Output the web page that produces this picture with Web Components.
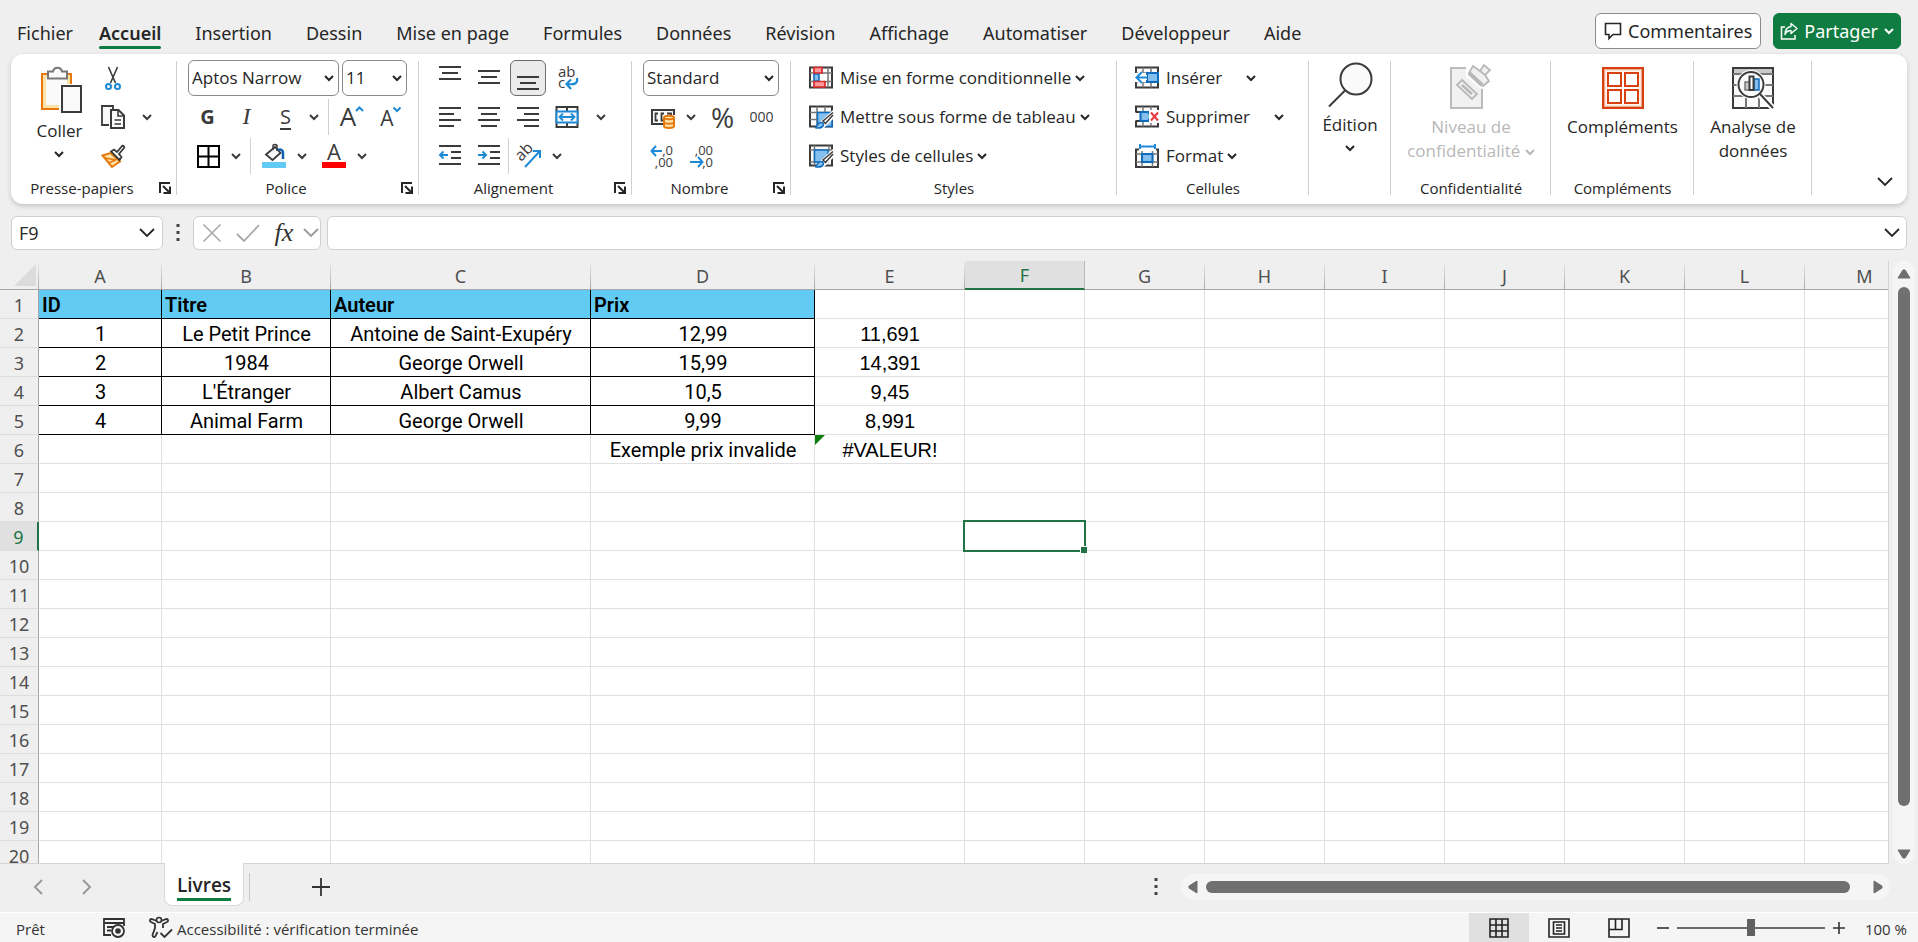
<!DOCTYPE html>
<html lang="fr">
<head>
<meta charset="utf-8">
<title>Livres – Classeur</title>
<style>
html,body{margin:0;height:100%}
body{font-family:"Open Sans","Noto Sans",sans-serif;font-size:17px;color:#262626;background:#efefef;overflow:hidden}
</style>
</head>
<body>
<workbook-app></workbook-app>
<script>
const RESET = `*{box-sizing:border-box}
button,select,input{font:inherit;color:inherit;background:none;border:0;margin:0;padding:0;outline:0}
button{display:flex;align-items:center;justify-content:center}`;

class Base extends HTMLElement {
  connectedCallback() {
    if (this.shadowRoot) return;
    const root = this.attachShadow({ mode: 'open' });
    root.innerHTML = `<style>${RESET}${this.css()}</style>${this.html()}`;
  }
  css() { return ''; }
  html() { return '<slot></slot>'; }
  attr(name, fallback = '') { return this.getAttribute(name) || fallback; }
}

const D = '#3b3b3b', B = '#1e8ad6', BF = '#83beec', BS = '#0f6cbd';
const lines = (list) => `<path d="${list.map(([x, y, w]) => `M${x} ${y}h${w}`).join('')}" stroke="${D}" stroke-width="2" fill="none"/>`;
const gridBox = `<path d="M1 1.5h22v20H1z" fill="#fafafa" stroke="${D}" stroke-width="2"/>`;
const paintBrush = `<path d="M24 5L10 18l-4 6h8l10-10z" fill="#fff"/><path d="M24 7.500l-10 8.500 2.500 2.500L24 10" fill="#fff" stroke="${D}" stroke-width="1.500"/><path d="M6 22.500c3-.5 2-5 5.500-5s4 3 1.500 4.500-5 1.200-7 .5z" fill="${BF}" stroke="${BS}" stroke-width="1.500"/>`;
const arrowHead = (d) => `<path d="${d}" fill="none" stroke="${B}" stroke-width="2"/>`;

const ICONS = {
  chev: [10, 6, `<path d="M1 1l4 4 4-4" fill="none" stroke="currentColor" stroke-width="2"/>`],
  chevBig: [16, 10, `<path d="M1 1l7 7 7-7" fill="none" stroke="currentColor" stroke-width="1.800"/>`],
  paste: [46, 46, `<path d="M8 7h29v35H8z" transform="translate(-3)" fill="#fbe2a8" stroke="#e8780a" stroke-width="2"/><path d="M9 11h21v27H9z" fill="#fafafa"/><path d="M11 4.500h5c1-5 8-5 9 0h5v7H11z" fill="#fafafa" stroke="#777" stroke-width="2"/><path d="M22 17h24v29H22z" fill="#fff"/><path d="M25 19h19v26H25z" fill="#fafafa" stroke="${D}" stroke-width="2"/>`],
  cut: [24, 24, `<path d="M7.500 1l7 16M16.500 1l-7 16" stroke="${D}" stroke-width="1.600"/><circle cx="7.500" cy="20.500" r="2.500" fill="none" stroke="${B}" stroke-width="2"/><circle cx="16.500" cy="20.500" r="2.500" fill="none" stroke="${B}" stroke-width="2"/>`],
  copy: [24, 24, `<path d="M8 20H1V1h11v3" fill="#fafafa" stroke="${D}" stroke-width="1.800"/><path d="M10 5h7.500l5.500 5.500V23H10z" fill="#fafafa" stroke="${D}" stroke-width="2"/><path d="M17 5v6h6M13.500 15h6.500M13.500 19h6.500" fill="none" stroke="${D}" stroke-width="1.600"/>`],
  brush: [24, 24, `<path d="M1.500 11.500l8-2.500 9.500 8.500-8 5.500z" fill="#fbe2a8" stroke="#e8780a" stroke-width="2"/><path d="M4 14l11 2M7 19l8-3" stroke="#e8780a" stroke-width="1.500"/><path d="M10 7.500l3-2 3 2.500 5-6c1-1 3 1 2 2l-5 6 2.500 3-2 3z" fill="#fafafa" stroke="${D}" stroke-width="1.800"/>`],
  borders: [24, 24, `<path d="M2 2h21v21H2zM12.500 2v21M2 12.500h21" fill="none" stroke="#000" stroke-width="2"/>`],
  fill: [24, 24, `<path d="M0 18h24v6H0z" fill="#61cbf3"/><path d="M4 10.500L13 3l5.500 6-8 7z" fill="#fafafa" stroke="${D}" stroke-width="1.800"/><path d="M11 6V2c0-2 4-2 4 0v5" fill="none" stroke="${D}" stroke-width="1.500"/><path d="M16 6c3-1 5 0 5 3v6" fill="none" stroke="#0f5fb0" stroke-width="2.500"/>`],
  fontColor: [24, 24, `<path d="M0 18h24v6H0z" fill="#f00"/><text x="12" y="16" text-anchor="middle" font-size="22" fill="${D}">A</text>`],
  grow: [26, 26, `<text x="9" y="22" text-anchor="middle" font-size="26" fill="${D}">A</text><path d="M17 7l3.500-3.500L24 7" fill="none" stroke="${B}" stroke-width="2"/>`],
  shrink: [26, 26, `<text x="9" y="22" text-anchor="middle" font-size="21" fill="${D}">A</text><path d="M15.500 3.500L19 7l3.500-3.500" fill="none" stroke="${B}" stroke-width="2"/>`],
  alTop: [24, 24, lines([[1, 1, 22], [4, 7, 16], [1, 13, 22]])],
  alMid: [24, 24, lines([[1, 5, 22], [4, 11, 16], [1, 17, 22]])],
  alBot: [24, 24, lines([[1, 11, 22], [4, 17, 16], [1, 23, 22]])],
  wrap: [24, 24, `<text x="3" y="11" font-size="15" fill="${D}">ab</text><text x="3" y="22" font-size="15" fill="${D}">c</text><path d="M22 12c1 5-2 7-9 6M16 13.500L11.500 18l4.500 5" fill="none" stroke="${B}" stroke-width="2.200"/>`],
  left: [24, 24, lines([[1, 3, 22], [1, 9, 15], [1, 15, 22], [1, 21, 15]])],
  center: [24, 24, lines([[1, 3, 22], [4, 9, 16], [1, 15, 22], [4, 21, 16]])],
  right: [24, 24, lines([[1, 3, 22], [8, 9, 15], [1, 15, 22], [8, 21, 15]])],
  merge: [24, 24, `<path d="M1.500 2h21v20h-21zM12 2v4M12 18v4" fill="none" stroke="${D}" stroke-width="2"/><path d="M1.500 6.500h21v11h-21z" fill="#fafafa" stroke="${B}" stroke-width="2"/><path d="M4.500 12h15M8 8.500L4.500 12 8 15.500M16 8.500l3.500 3.500-3.500 3.500" fill="none" stroke="${B}" stroke-width="1.800"/>`],
  outdent: [24, 24, lines([[1, 2, 22], [13, 8, 10], [13, 14, 10], [1, 20, 22]]) + arrowHead('M10 11H2M5.500 7.500L2 11l3.500 3.500')],
  indent: [24, 24, lines([[1, 2, 22], [13, 8, 10], [13, 14, 10], [1, 20, 22]]) + arrowHead('M1 11h8M5.500 7.500L9 11l-3.500 3.500')],
  angle: [26, 26, `<text x="4" y="17" font-size="16" fill="${D}" transform="rotate(-45 7 17)">ab</text><path d="M9 24L24 8M17 8h7v7" fill="none" stroke="${B}" stroke-width="2"/>`],
  cash: [26, 24, `<path d="M2 5h22v14H2z" fill="#fafafa" stroke="${D}" stroke-width="2"/><path d="M8 8.500H5.500v7H8M14 8.500h-2.500v7H14M17 8.500h4V11" fill="none" stroke="${D}" stroke-width="1.800"/><path d="M13 10h13v14H13z" fill="#fff"/><path d="M14 12.500c0-2.500 10-2.500 10 0v8.500c0 2.500-10 2.500-10 0z" fill="#fbe2a8" stroke="#e8780a" stroke-width="2"/><path d="M14 12.500c0 2.300 10 2.300 10 0M14 17c0 2.300 10 2.300 10 0" fill="none" stroke="#e8780a" stroke-width="1.800"/>`],
  addDec: [26, 26, `<text x="23" y="12" text-anchor="end" font-size="13" fill="${D}">,0</text><text x="23" y="24" text-anchor="end" font-size="13" fill="${D}">,00</text><path d="M12 8H1.500M6 3L1.500 8 6 13" fill="none" stroke="${B}" stroke-width="2"/>`],
  delDec: [26, 26, `<text x="24" y="12" text-anchor="end" font-size="13" fill="${D}">,00</text><text x="24" y="24" text-anchor="end" font-size="13" fill="${D}">,0</text><path d="M1 19h12M9 14l4.500 5-4.500 5" fill="none" stroke="${B}" stroke-width="2"/>`],
  launcher: [12, 12, `<path d="M1 11V1h10M4 4l6 6M11 4.500V11H4.500" fill="none" stroke="#262626" stroke-width="2"/>`],
  cond: [24, 24, gridBox + `<path d="M5.500 1.500v20M13 1.500v20M19 1.500v20M1 7h22M1 15.500h22" stroke="#777" stroke-width="1.500"/><path d="M5 8h5v7H5z" fill="${BF}" stroke="${BS}" stroke-width="1.500"/><path d="M11 8h7v7h-7z" fill="#fff"/><path d="M5 1.500h8V7H5zM5 15.500h11v5.500H5z" fill="#fb9a9e" stroke="#d92b2b" stroke-width="1.700"/>`],
  tableFmt: [24, 24, gridBox + `<path d="M8 1.500v20M16 1.500v6M1 7.500h22M1 14.500h7" stroke="#777" stroke-width="1.500"/><path d="M8.500 7.500H23v14H8.500z" fill="${BF}" stroke="${BS}" stroke-width="1.500"/>` + paintBrush],
  cellFmt: [24, 24, gridBox + `<path d="M5.500 1.500v20M20 1.500v6M1 6h22M1 18h7" stroke="#777" stroke-width="1.500"/><path d="M5.500 6H19v12H5.500z" fill="${BF}" stroke="${BS}" stroke-width="1.500"/>` + paintBrush],
  insert: [24, 24, gridBox + `<path d="M8 1.500v20M16 1.500v20M1 7h22M1 16h22" stroke="#777" stroke-width="1.500"/><path d="M0 7h12v9H0z" fill="#fff"/><path d="M12 7h11v9H12z" fill="${BF}" stroke="${BS}" stroke-width="2"/><path d="M12 11.500H1.500M7 6l-5.500 5.500L7 17" fill="none" stroke="#fff" stroke-width="5"/><path d="M12 11.500H1.500M7 6l-5.500 5.500L7 17" fill="none" stroke="${B}" stroke-width="2"/>`],
  remove: [24, 24, gridBox + `<path d="M8 1.500v20M16 1.500v20M1 7h22M1 16h22" stroke="#777" stroke-width="1.500"/><path d="M0 7.500h24v8H0z" fill="#fff"/><path d="M1 7h5M1 16h5" stroke="${D}" stroke-width="2"/><path d="M5.500 7H13l3 4.500-3 4.500H5.500z" fill="${BF}" stroke="${BS}" stroke-width="2"/><path d="M14 5h10v13H14z" fill="#fff"/><path d="M16 7.500l7 8M23 7.500l-7 8" stroke="#e8383d" stroke-width="2"/>`],
  format: [24, 24, `<path d="M1 5.500h22V23H1z" fill="#fafafa" stroke="${D}" stroke-width="2"/><path d="M7 5v18M17.500 5v18M1 10h22M1 18h22" stroke="#777" stroke-width="1.500"/><path d="M4 0h17v7H4z" fill="#fff"/><path d="M5 2.500h15M5 0v5M20 0v5" stroke="${B}" stroke-width="2"/><path d="M7 10h10.500v8H7z" fill="${BF}" stroke="${BS}" stroke-width="2"/>`],
  find: [46, 44, `<circle cx="29" cy="16" r="15.500" fill="#fafafa" stroke="${D}" stroke-width="2"/><path d="M18 27.500L2 43.500" stroke="${D}" stroke-width="2"/>`],
  privacy: [42, 42, `<path d="M1 1h31v40H1z" fill="#f1f1f1" stroke="#bcbcbc" stroke-width="2"/><path d="M16 0h26v20l-10 2-16-12z" fill="#fff"/><g fill="#f1f1f1" stroke="#b8b8b8" stroke-width="1.800"><path d="M12 13l15 14-5 5L7 18z"/><path d="M12 18l10 9" stroke-width="2.500"/><path d="M23-1l7 5 4-6 6 5-5 5 4 6-6 5L19 6z"/><path d="M19 6l13 12" stroke-width="4"/><path d="M30 4l5 4"/></g>`],
  addins: [42, 42, `<g fill="#fff" stroke="#d9400f"><path d="M1.500 1.500h39v39h-39z" fill="#fde8df" stroke="#f0a88f" stroke-width="3"/><path d="M1 1h40v40H1z" fill="none" stroke-width="2"/><path d="M4.500 4.500h33v33h-33z" stroke="none"/><path d="M6 6h13v13H6zM23 6h13v13H23zM6 23h13v13H6zM23 23h13v13H23z" stroke-width="2"/></g>`],
  analyze: [42, 42, `<path d="M1 1h40v40H1z" fill="#fafafa" stroke="${D}" stroke-width="2"/><path d="M2 2h38v5H2z" fill="#c8c8c8"/><path d="M1 7h40M1 18h40M1 29h40M14 29v12M27 29v12" stroke="#777" stroke-width="2"/><circle cx="19" cy="17.500" r="14.500" fill="#fff"/><path d="M28 28l14 14" stroke="#fff" stroke-width="6"/><circle cx="19" cy="17.500" r="12.500" fill="#fafafa" stroke="${D}" stroke-width="2"/><path d="M28 27l13 14" stroke="${D}" stroke-width="2"/><path d="M13 15h5v8h-5z" fill="#c8c8c8" stroke="#777" stroke-width="1.500"/><path d="M22 12h5v11h-5z" fill="${BF}" stroke="${BS}" stroke-width="1.500"/><path d="M17.500 9.500h4V23h-4z" fill="#fff" stroke="${D}" stroke-width="2"/>`],
  comment: [18, 18, `<path d="M1.500 1.500h15v11H9L5 16.500v-4H1.500z" fill="none" stroke="currentColor" stroke-width="1.600"/>`],
  share: [18, 18, `<path d="M5 5H1.500v12H15v-4" fill="none" stroke="currentColor" stroke-width="1.500"/><path d="M11 1.500L17 6.500l-6 5V8.500C7.500 8.500 6 10 5 12.500 5 7.500 8 5 11 4.500z" fill="none" stroke="currentColor" stroke-width="1.400" stroke-linejoin="round"/>`],
  dots: [4, 18, `<path d="M0.500 0h3v3h-3zM0.500 7h3v3h-3zM0.500 14h3v3h-3z" fill="#444"/>`],
  cancel: [20, 20, `<path d="M1.500 1.500l17 17M18.500 1.500l-17 17" stroke="#a8a8a8" stroke-width="1.600"/>`],
  check: [24, 18, `<path d="M1 10l7 7L23 1" fill="none" stroke="#a8a8a8" stroke-width="1.800"/>`],
  prev: [10, 16, `<path d="M9 1L2 8l7 7" fill="none" stroke="#999" stroke-width="2"/>`],
  next: [10, 16, `<path d="M1 1l7 7-7 7" fill="none" stroke="#999" stroke-width="2"/>`],
  plus: [18, 18, `<path d="M9 0v18M0 9h18" stroke="#333" stroke-width="1.800"/>`],
  triL: [10, 14, `<path d="M9 1v12L1 8V6z" fill="#6e6e6e" stroke="#6e6e6e" stroke-linejoin="round"/>`],
  triR: [10, 14, `<path d="M1 1v12l8-5V6z" fill="#6e6e6e" stroke="#6e6e6e" stroke-linejoin="round"/>`],
  triU: [14, 10, `<path d="M1 9h12L8 1H6z" fill="#6e6e6e" stroke="#6e6e6e" stroke-linejoin="round"/>`],
  triD: [14, 10, `<path d="M1 1h12L8 9H6z" fill="#6e6e6e" stroke="#6e6e6e" stroke-linejoin="round"/>`],
  macro: [22, 20, `<path d="M8 17H1V1h20v7M1 5h20M4 9h6M4 12.500h4" fill="none" stroke="#333" stroke-width="1.800"/><circle cx="15" cy="13" r="6" fill="#f5f5f5" stroke="#333" stroke-width="1.800"/><circle cx="15" cy="13" r="2.800" fill="#333"/>`],
  access: [24, 22, `<circle cx="10" cy="3" r="2.500" fill="none" stroke="#333" stroke-width="1.600"/><path d="M8 4L2.500 2C.500 2 .500 4.500 2 5l4 2v4L3.500 18c0 2.500 2.500 2.500 3 1l2-4M12 4l5.500-2c2 0 2 2.500.5 3l-4 2v4M11.500 16l4 4L23 12.500" fill="none" stroke="#333" stroke-width="1.800"/>`],
  normal: [20, 20, `<path d="M1 1h18v18H1zM7 1v18M13 1v18M1 7h18M1 13h18" fill="none" stroke="#222" stroke-width="1.600"/>`],
  pageView: [22, 20, `<path d="M1 1h20v18H1zM5.500 4h11v12h-11z" fill="none" stroke="#222" stroke-width="1.600"/><path d="M8 7h6M8 10h6M8 13h6" stroke="#222" stroke-width="1.500"/>`],
  breaks: [22, 20, `<path d="M1 1h20v18H1zM1 11.500h13V1M7.500 1v10.500" fill="none" stroke="#222" stroke-width="1.600"/>`],
  minus: [12, 12, `<path d="M0 6h12" stroke="#333" stroke-width="1.600"/>`],
  plusSmall: [12, 12, `<path d="M0 6h12M6 0v12" stroke="#333" stroke-width="1.600"/>`],
};

customElements.define('ui-icon', class extends Base {
  css() { return `:host{display:block;flex:none;line-height:0}svg{display:block;overflow:visible}text{font-family:"Open Sans","Noto Sans",sans-serif}`; }
  html() {
    const [w, h, body] = ICONS[this.attr('name')];
    return `<svg width="${w}" height="${h}" viewBox="0 0 ${w} ${h}" aria-hidden="true">${body}</svg>`;
  }
});

customElements.define('tool-button', class extends Base {
  css() { return `:host{display:block;flex:none;width:39px}:host([drop]){width:18px}
    button{width:100%;height:36px;font-size:20px;color:#3b3b3b}
    :host([pressed]) button{width:36px;margin:0 auto;background:#ebebeb;border:1px solid #6b6b6b;border-radius:6px}`; }
  html() { return `<button type="button" aria-label="${this.attr('label')}">${this.hasAttribute('drop') ? '<ui-icon name="chev"></ui-icon>' : '<slot></slot>'}</button>`; }
});

customElements.define('menu-button', class extends Base {
  css() { return `:host{display:block}
    div{display:flex;align-items:center}
    button{gap:4px;height:36px;white-space:nowrap}
    span{padding-left:3px}
    .split{width:18px;margin-left:20px}`; }
  html() {
    const split = this.hasAttribute('split');
    return `<div><button type="button"><ui-icon name="${this.attr('icon')}"></ui-icon><span><slot></slot></span>${split ? '' : '<ui-icon name="chev"></ui-icon>'}</button>${split ? '<button type="button" class="split" aria-label="Options"><ui-icon name="chev"></ui-icon></button>' : ''}</div>`;
  }
});

customElements.define('big-button', class extends Base {
  css() { return `:host{display:block;flex:1;text-align:center;line-height:24px}
    button{width:100%;flex-direction:column;justify-content:flex-start;gap:6px;padding-top:9px;white-space:nowrap}
    :host([raised]) button{padding-top:5px}
    :host([disabled]){color:#b8b8b8}
    .lower{display:flex;flex-direction:column;align-items:center;gap:8px}`; }
  html() { return `<button type="button" ${this.hasAttribute('disabled') ? 'disabled' : ''}><ui-icon name="${this.attr('icon')}"></ui-icon><span class="lower"><span><slot></slot></span>${this.hasAttribute('drop') ? '<ui-icon name="chev"></ui-icon>' : ''}</span></button>`; }
});

customElements.define('combo-box', class extends Base {
  css() { return `:host{display:grid;align-items:center;height:36px;border:1px solid #8a8a8a;border-radius:6px;background:#fff}
    select,ui-icon{grid-area:1/1}
    select{appearance:none;width:100%;height:34px;padding:0 3px;line-height:34px}
    ui-icon{justify-self:end;margin-right:4px;pointer-events:none}`; }
  html() { return `<select aria-label="${this.attr('label')}"><option>${this.attr('value')}</option></select><ui-icon name="chev"></ui-icon>`; }
});

customElements.define('ribbon-group', class extends Base {
  css() { return `:host{display:flex;flex-direction:column;flex:none;width:var(--w);height:150px;padding-top:4px;
      background:linear-gradient(#d0d0d0,#d0d0d0) right 0 top 7px/1px 134px no-repeat}
    .body{height:117px;padding-left:var(--pad,11px);display:flex}
    footer{display:flex;align-items:center;height:25px;font-size:15px;line-height:20px}
    footer span{flex:1;text-align:center}
    button{width:24px;height:24px}`; }
  html() { return `<div class="body"><slot></slot></div><footer><span>${this.attr('label')}</span>${this.hasAttribute('launcher') ? '<button type="button" aria-label="Options du groupe"><ui-icon name="launcher"></ui-icon></button>' : ''}</footer>`; }
});

customElements.define('tool-rows', class extends Base {
  css() { return `:host{display:grid;grid-template-rows:repeat(3,39px)}`; }
});
customElements.define('tool-row', class extends Base {
  css() { return `:host{display:flex;align-items:center;height:39px}:host([gap]){gap:3px}`; }
});
customElements.define('tool-sep', class extends Base {
  css() { return `:host{display:block;flex:none;width:1px;height:36px;margin:0 3px 0 5px;background:#d0d0d0}:host([tight]){margin:0}:host([blank]){background:none;width:3px;margin:0}`; }
  html() { return ''; }
});

customElements.define('title-bar', class extends Base {
  css() { return `:host{display:flex;align-items:center;height:54px;padding:8px 17px 0;font-family:"Noto Sans","Open Sans",sans-serif;font-size:18px;line-height:24px}
    nav{display:flex;gap:26px;flex:1;padding-top:4px}
    .tabs{display:flex;gap:34px}
    a{color:inherit;text-decoration:none;white-space:nowrap;position:relative}
    a.on{font-weight:600}
    a.on::after{content:"";position:absolute;left:0;right:0;bottom:-4px;height:3px;border-radius:2px;background:#107c41}
    .actions{display:flex;gap:12px}
    button{height:36px;padding:0 8px;gap:6px;border-radius:6px;border:1px solid #8a8a8a;background:#fff}
    .share{background:#107c41;border-color:#107c41;color:#fff;padding:0 6px}`; }
  html() {
    const tabs = ['Accueil', 'Insertion', 'Dessin', 'Mise en page', 'Formules', 'Données', 'Révision', 'Affichage', 'Automatiser', 'Développeur', 'Aide'];
    return `<nav><a href="#">Fichier</a><div class="tabs">${tabs.map((t) => `<a href="#" class="${t === 'Accueil' ? 'on' : ''}">${t}</a>`).join('')}</div></nav>
    <div class="actions"><button type="button"><ui-icon name="comment"></ui-icon><span>Commentaires</span></button>
    <button type="button" class="share"><ui-icon name="share"></ui-icon><span>Partager</span><ui-icon name="chev"></ui-icon></button></div>`;
  }
});

customElements.define('ribbon-bar', class extends Base {
  css() { return `:host{display:flex;height:150px;margin:0 11px;background:#fff;border-radius:12px;box-shadow:0 2px 5px #0000002e}
    .collapse{margin-left:auto;width:44px;height:44px;align-self:flex-end}
    .u{text-decoration:underline;text-underline-offset:4px;text-decoration-thickness:2px}
    .i{font-family:"Liberation Serif",serif;font-style:italic;font-size:24px}
    .pct{font-size:28px}.k{font-size:14px}
    .clip{flex:none;width:67px}
    .inline{display:inline-block;vertical-align:middle}`; }
  html() {
    const b = (icon, label, extra = '') => `<tool-button label="${label}" ${extra}><ui-icon name="${icon}"></ui-icon></tool-button>`;
    const drop = `<tool-button drop label="Plus d’options"></tool-button>`;
    const space = `<tool-sep blank></tool-sep>`;
    return `
    <ribbon-group label="Presse-papiers" launcher style="--w:166px;--pad:15px">
      <big-button icon="paste" drop class="clip">Coller</big-button>
      <tool-rows>
        <tool-row>${b('cut', 'Couper')}</tool-row>
        <tool-row>${b('copy', 'Copier')}${space}${space}${drop}</tool-row>
        <tool-row>${b('brush', 'Reproduire la mise en forme')}</tool-row>
      </tool-rows>
    </ribbon-group>
    <ribbon-group label="Police" launcher style="--w:242px">
      <tool-rows>
        <tool-row gap><combo-box label="Police" value="Aptos Narrow" style="width:151px"></combo-box><combo-box label="Taille" value="11" style="width:65px"></combo-box></tool-row>
        <tool-row><tool-button label="Gras"><b>G</b></tool-button><tool-button label="Italique"><span class="i">I</span></tool-button><tool-button label="Souligné"><span class="u">S</span></tool-button>${drop}<tool-sep></tool-sep>${b('grow', 'Agrandir la police')}${b('shrink', 'Réduire la police')}</tool-row>
        <tool-row>${b('borders', 'Bordures')}${drop}<tool-sep></tool-sep>${b('fill', 'Remplissage')}${drop}${space}${b('fontColor', 'Couleur de police')}${drop}</tool-row>
      </tool-rows>
    </ribbon-group>
    <ribbon-group label="Alignement" launcher style="--w:213px">
      <tool-rows>
        <tool-row>${b('alTop', 'Aligner en haut')}${b('alMid', 'Aligner au centre')}${b('alBot', 'Aligner en bas', 'pressed')}${b('wrap', 'Renvoyer à la ligne')}</tool-row>
        <tool-row>${b('left', 'Aligner à gauche')}${b('center', 'Centrer')}${b('right', 'Aligner à droite')}${b('merge', 'Fusionner')}${space}${space}${drop}</tool-row>
        <tool-row>${b('outdent', 'Diminuer le retrait')}${b('indent', 'Augmenter le retrait')}<tool-sep tight></tool-sep>${b('angle', 'Orientation')}${drop}</tool-row>
      </tool-rows>
    </ribbon-group>
    <ribbon-group label="Nombre" launcher style="--w:159px">
      <tool-rows>
        <tool-row><combo-box label="Format de nombre" value="Standard" style="width:136px"></combo-box></tool-row>
        <tool-row>${b('cash', 'Format comptable')}${drop}${space}<tool-button label="Pourcentage"><span class="pct">%</span></tool-button><tool-button label="Milliers"><span class="k">000</span></tool-button></tool-row>
        <tool-row>${b('addDec', 'Ajouter une décimale')}${b('delDec', 'Réduire les décimales')}</tool-row>
      </tool-rows>
    </ribbon-group>
    <ribbon-group label="Styles" style="--w:326px;--pad:18px">
      <tool-rows>
        <tool-row><menu-button icon="cond">Mise en forme conditionnelle</menu-button></tool-row>
        <tool-row><menu-button icon="tableFmt">Mettre sous forme de tableau</menu-button></tool-row>
        <tool-row><menu-button icon="cellFmt">Styles de cellules</menu-button></tool-row>
      </tool-rows>
    </ribbon-group>
    <ribbon-group label="Cellules" style="--w:192px;--pad:18px">
      <tool-rows>
        <tool-row><menu-button icon="insert" split>Insérer</menu-button></tool-row>
        <tool-row><menu-button icon="remove" split>Supprimer</menu-button></tool-row>
        <tool-row><menu-button icon="format">Format</menu-button></tool-row>
      </tool-rows>
    </ribbon-group>
    <ribbon-group style="--w:82px;--pad:0px"><big-button icon="find" raised drop>Édition</big-button></ribbon-group>
    <ribbon-group label="Confidentialité" style="--w:160px;--pad:0px"><big-button icon="privacy" disabled>Niveau de<br>confidentialité <ui-icon name="chev" class="inline"></ui-icon></big-button></ribbon-group>
    <ribbon-group label="Compléments" style="--w:143px;--pad:0px"><big-button icon="addins">Compléments</big-button></ribbon-group>
    <ribbon-group style="--w:118px;--pad:0px"><big-button icon="analyze">Analyse de<br>données</big-button></ribbon-group>
    <button type="button" class="collapse" aria-label="Réduire le ruban"><ui-icon name="chevBig"></ui-icon></button>`;
  }
});

customElements.define('formula-bar', class extends Base {
  css() { return `:host{display:flex;align-items:center;height:34px;margin:12px 11px 11px;font-size:18px}
    .box{display:flex;align-items:center;height:34px;background:#fff;border:1px solid #d0d0d0;border-radius:6px}
    .name{width:152px;padding:0 7px}
    .name input{width:100%;min-width:0;flex:1}
    .grip{width:30px;display:flex;justify-content:center}
    .fx{width:128px;color:#999;margin-right:6px}
    .fx button{width:36px;height:32px}
    .fx button:last-child{width:17px}
    i{font-family:"Liberation Serif",serif;font-size:26px;color:#333}
    .formula{flex:1;padding:0 6px}
    .formula input{flex:1}`; }
  html() { return `<div class="box name"><input aria-label="Zone Nom" value="F9"><button type="button" aria-label="Cellules nommées"><ui-icon name="chevBig"></ui-icon></button></div>
    <div class="grip"><ui-icon name="dots"></ui-icon></div>
    <div class="box fx"><button type="button" disabled aria-label="Annuler"><ui-icon name="cancel"></ui-icon></button><button type="button" disabled aria-label="Entrer"><ui-icon name="check"></ui-icon></button><button type="button" aria-label="Insérer une fonction"><i>fx</i></button><button type="button" aria-label="Fonctions"><ui-icon name="chevBig"></ui-icon></button></div>
    <div class="box formula"><input aria-label="Formule"><button type="button" aria-label="Développer"><ui-icon name="chevBig"></ui-icon></button></div>`; }
});

customElements.define('sheet-grid', class extends Base {
  css() { return `:host{display:block;flex:1;min-width:0;overflow:hidden;border-right:1px solid #d4d4d4;border-bottom:1px solid #d4d4d4;font-size:20px}
    table{table-layout:fixed;border-collapse:separate;border-spacing:0;width:1925px;background:#fff}
    th{font-family:"Noto Sans",sans-serif;font-weight:400;font-size:18px;color:#505050;background:#efefef;padding:2px 0 0;line-height:26px}
    thead th{height:29px;border-style:solid;border-width:0 1px 1px 0;border-image:linear-gradient(#efefef,#a6a6a6) 1}
    thead th.cur{background:#e0e0e0;color:#217346;border-image:none;border-color:#bbb;border-bottom:2px solid #217346;line-height:25px}
    thead th:first-child{padding:0}
    thead th svg{display:block;margin-left:14px}
    tbody th{border-right:1px solid #a6a6a6;border-bottom:1px solid #dcdcdc}
    tbody th.cur{background:#e0e0e0;color:#217346;border-right:2px solid #217346}
    tr{height:29px}
    td{height:29px;padding:2px 2px 0 3px;line-height:26px;font-family:Roboto,sans-serif;color:#000;text-align:center;white-space:nowrap;border-right:1px solid #e0e0e0;border-bottom:1px solid #e0e0e0}
    td.k{border-color:#000}
    td.h{background:#61cbf3;font-weight:600;text-align:left}
    td.e{font-family:"Liberation Sans",Arial,sans-serif}
    td.err,td.sel{position:relative}
    td.err::before{content:"";position:absolute;left:0;top:0;border:5px solid #0a800a;border-right-color:transparent;border-bottom-color:transparent}
    .ring{position:absolute;inset:-2px;border:2px solid #217346}
    .ring::after{content:"";position:absolute;right:-3px;bottom:-3px;width:6px;height:6px;background:#217346;border:solid #fff;border-width:1px 0 0 1px;box-sizing:content-box}`; }
  html() {
    const widths = [39, 123, 169, 260, 224, 150, ...Array(8).fill(120)];
    const letters = [...'ABCDEFGHIJKLM'];
    const data = [
      ['ID', 'Titre', 'Auteur', 'Prix'],
      ['1', 'Le Petit Prince', 'Antoine de Saint-Exupéry', '12,99', '11,691'],
      ['2', '1984', 'George Orwell', '15,99', '14,391'],
      ['3', "L'Étranger", 'Albert Camus', '10,5', '9,45'],
      ['4', 'Animal Farm', 'George Orwell', '9,99', '8,991'],
      ['', '', '', 'Exemple prix invalide', '#VALEUR!'],
    ];
    const cell = (r, c) => {
      const cls = [];
      if (r < 5 && c < 4) cls.push('k');
      if (r === 0 && c < 4) cls.push('h');
      if (c === 4) cls.push('e');
      if (r === 5 && c === 4) cls.push('err');
      const sel = r === 8 && c === 5;
      if (sel) cls.push('sel');
      return `<td class="${cls.join(' ')}">${(data[r] && data[r][c]) || ''}${sel ? '<span class="ring"></span>' : ''}</td>`;
    };
    const rows = Array.from({ length: 20 }, (_, r) => `<tr><th scope="row" class="${r === 8 ? 'cur' : ''}">${r + 1}</th>${letters.map((_, c) => cell(r, c)).join('')}</tr>`).join('');
    return `<table><colgroup>${widths.map((w) => `<col style="width:${w}px">`).join('')}</colgroup>
      <thead><tr><th><svg width="22" height="22" viewBox="0 0 22 22" aria-hidden="true"><path d="M22 0v22H0z" fill="#dcdcdc"/></svg></th>${letters.map((l) => `<th scope="col" class="${l === 'F' ? 'cur' : ''}">${l}</th>`).join('')}</tr></thead>
      <tbody>${rows}</tbody></table>`;
  }
});

customElements.define('scroll-bar', class extends Base {
  css() { return `:host{display:flex;align-items:center;background:#f5f5f5;border-radius:13px;gap:8px;padding:0 7px}
    :host([vertical]){flex-direction:column;padding:8px 0 5px}
    .track{flex:1;display:flex;align-self:stretch;align-items:center;justify-content:center}
    .thumb{background:#707070;border-radius:6px}
    :host(:not([vertical])) .track{padding-right:15px}
    :host(:not([vertical])) .thumb{height:12px;width:100%}
    :host([vertical]) .track{padding-bottom:35px}
    :host([vertical]) .thumb{width:12px;height:100%}`; }
  html() {
    const v = this.hasAttribute('vertical');
    return `<button type="button" aria-label="Précédent"><ui-icon name="${v ? 'triU' : 'triL'}"></ui-icon></button><div class="track"><div class="thumb"></div></div><button type="button" aria-label="Suivant"><ui-icon name="${v ? 'triD' : 'triR'}"></ui-icon></button>`;
  }
});

customElements.define('sheet-tabs', class extends Base {
  css() { return `:host{display:flex;align-items:center;height:48px;padding:0 28px 2px 0}
    .nav{display:flex;gap:39px;width:164px;padding-left:33px}
    .tab{align-self:flex-start;height:43px;width:80px;background:#fff;border:1px solid #d9d9d9;border-top:0;border-radius:0 0 8px 8px;margin-top:-1px}
    .tab span{font:600 19px/26px "Open Sans","Noto Sans",sans-serif;border-bottom:3px solid #107c41;margin-top:4px}
    .sep{width:1px;height:28px;background:#c8c8c8;margin-left:5px}
    .add{width:48px;height:36px;margin-left:47px}
    .grip{margin-left:auto;margin-right:23px}
    scroll-bar{width:709px;max-width:40%;height:26px}`; }
  html() { return `<div class="nav"><button type="button" aria-label="Feuille précédente"><ui-icon name="prev"></ui-icon></button><button type="button" aria-label="Feuille suivante"><ui-icon name="next"></ui-icon></button></div>
    <button type="button" class="tab"><span>Livres</span></button><div class="sep"></div>
    <button type="button" class="add" aria-label="Nouvelle feuille"><ui-icon name="plus"></ui-icon></button>
    <ui-icon class="grip" name="dots"></ui-icon><scroll-bar></scroll-bar>`; }
});

customElements.define('status-bar', class extends Base {
  css() { return `:host{display:flex;align-items:center;height:30px;padding:0 11px 0 16px;background:#f5f5f5;border-top:1px solid #fff;font-size:15px;line-height:20px;color:#333}
    span,output{padding-top:2px}
    .ready{width:87px}
    .acc{gap:4px;margin-left:24px;white-space:nowrap}
    .views{display:flex;margin-left:auto}
    .views button{width:60px;height:29px}
    .views .on{background:#e0e0e0}
    .zoom{width:28px;height:28px}
    input[type=range]{appearance:none;width:148px;height:20px}
    input::-webkit-slider-runnable-track{height:2px;background:#6b6b6b}
    input::-webkit-slider-thumb{appearance:none;width:8px;height:17px;margin-top:-8px;background:#616161}
    output{margin-left:12px;white-space:nowrap}`; }
  html() { return `<span class="ready">Prêt</span><button type="button" aria-label="Enregistrer une macro"><ui-icon name="macro"></ui-icon></button>
    <button type="button" class="acc"><ui-icon name="access"></ui-icon><span>Accessibilité : vérification terminée</span></button>
    <div class="views"><button type="button" class="on" aria-label="Normal"><ui-icon name="normal"></ui-icon></button><button type="button" aria-label="Mise en page"><ui-icon name="pageView"></ui-icon></button><button type="button" aria-label="Sauts de page"><ui-icon name="breaks"></ui-icon></button></div>
    <button type="button" class="zoom" aria-label="Zoom arrière"><ui-icon name="minus"></ui-icon></button><input type="range" aria-label="Zoom" min="0" max="200" value="100"><button type="button" class="zoom" aria-label="Zoom avant"><ui-icon name="plusSmall"></ui-icon></button><output>100 %</output>`; }
});

customElements.define('workbook-app', class extends Base {
  css() { return `:host{display:flex;flex-direction:column;height:100vh}
    main{flex:1;min-height:0;display:flex;gap:4px;padding-right:3px}
    main scroll-bar{width:22px}
    title-bar,ribbon-bar,formula-bar,sheet-tabs,status-bar{flex:none}`; }
  html() { return `<title-bar></title-bar><ribbon-bar></ribbon-bar><formula-bar></formula-bar>
    <main><sheet-grid></sheet-grid><scroll-bar vertical></scroll-bar></main>
    <sheet-tabs></sheet-tabs><status-bar></status-bar>`; }
});
</script>
</body>
</html>
